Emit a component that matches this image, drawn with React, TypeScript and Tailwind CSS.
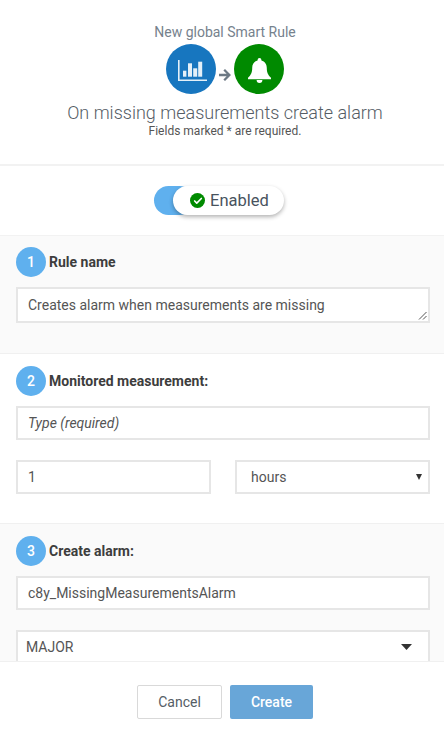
import React from "react";
import { Check } from "lucide-react";

const Step: React.FC<{ n: number; label: string }> = ({ n, label }) => (
  <div className="flex items-center h-[30px] mb-[10px]">
    <span className="flex items-center justify-center w-[30px] h-[30px] rounded-full bg-[#5fb0ee] text-white text-[14px] font-medium">
      {n}
    </span>
    <span className="ml-[3px] text-[14px] font-bold text-[#3d3d3d]">{label}</span>
  </div>
);

const Field: React.FC<{ className?: string; children?: React.ReactNode }> = ({ className, children }) => (
  <div className={`flex items-center h-[34px] border-2 border-[#e6e6e6] bg-white px-[10px] text-[14px] text-[#555] ${className ?? ""}`}>
    {children}
  </div>
);

export default function App() {
  return (
    <div className="flex flex-col w-[444px] h-[733px] overflow-hidden bg-white font-['Roboto',sans-serif]">
      <div className="flex-1 min-h-0 overflow-hidden">
        <header className="h-[166px] border-b-2 border-[#f2f2f2] flex flex-col items-center pt-[24px] pl-[6px]">
          <p className="text-[14px] leading-[16px] text-[#76828d]">New global Smart Rule</p>
          <div className="flex items-center mt-[4px]">
            <div className="w-[50px] h-[50px] rounded-full bg-[#1776bf] flex items-center justify-center">
              <svg className="ml-[3px] mt-[3px]" width="29" height="21" viewBox="0 0 29 21" fill="#e4f0f8">
                <path d="M0 0h1.6v19.4H29V21H0z" />
                <rect x="5" y="10.7" width="3.4" height="6" />
                <rect x="10" y="3.3" width="4" height="13.4" />
                <rect x="15.2" y="8.3" width="4" height="8.4" />
                <rect x="20.2" y="1.7" width="4" height="15" />
              </svg>
            </div>
            <svg className="mx-[3px] mt-[12px]" width="12" height="12" viewBox="0 0 12 12" fill="#6d7a85">
              <path d="M6 0 12 6 6 12 4.4 10.4 7.6 7.2H0V4.8H7.6L4.4 1.6z" />
            </svg>
            <div className="w-[50px] h-[50px] rounded-full bg-[#008a00] flex items-center justify-center">
              <svg className="mt-[3px]" width="23" height="25" viewBox="0 0 24 26" fill="#ffffff">
                <path d="M12 0a2 2 0 0 1 2 2v.6c3.6.9 5.6 3.9 5.6 7.6 0 5 1.2 7.6 4.4 10.3v1.5H0v-1.5c3.2-2.7 4.4-5.3 4.4-10.3 0-3.7 2-6.7 5.6-7.6V2a2 2 0 0 1 2-2z" />
                <path d="M9 23h6a3 3 0 0 1-6 0z" />
              </svg>
            </div>
          </div>
          <h1 className="mt-[8px] text-[18px] leading-[22px] font-light text-[#555d65]">
            On missing measurements create alarm
          </h1>
          <p className="text-[12px] leading-[13px] mt-[1px] text-[#555]">Fields marked * are required.</p>
        </header>

        <div className="h-[70px] border-b border-[#f2f2f2] flex items-center justify-center">
          <div className="relative w-[130px] h-[29px] -ml-[6px]">
            <div className="absolute left-0 top-0 w-[40px] h-[29px] rounded-full bg-[#5fb0ee]" />
            <div className="absolute left-[19px] top-0 w-[111px] h-[29px] rounded-full bg-white shadow-[0_2px_4px_rgba(0,0,0,0.3)] flex items-center pl-[17px]">
              <span className="flex items-center justify-center w-[15px] h-[15px] rounded-full bg-[#008a00]">
                <Check className="w-[10px] h-[10px] text-white" strokeWidth={4} />
              </span>
              <span className="ml-[5px] mt-[2px] text-[16.5px] text-[#48535e]">Enabled</span>
            </div>
          </div>
        </div>

        <section className="h-[118px] bg-[#fafafa] border-b border-[#f0f0f0] pl-[16px] pr-[14px] pt-[11px]">
          <Step n={1} label="Rule name" />
          <Field className="relative h-[36px] mt-[1px]">
            Creates alarm when measurements are missing
            <svg className="absolute right-[1px] bottom-[1px]" width="9" height="9" viewBox="0 0 9 9" stroke="#555" strokeWidth="1">
              <path d="M1 8.5 8.5 1M5 8.5 8.5 5" />
            </svg>
          </Field>
        </section>

        <section className="h-[170px] border-b border-[#f0f0f0] pl-[16px] pr-[14px] pt-[12px]">
          <Step n={2} label="Monitored measurement:" />
          <Field className="italic text-[#7b7b7b]">Type (required)</Field>
          <div className="flex gap-[24px] mt-[20px]">
            <Field className="w-[195px]">1</Field>
            <Field className="w-[195px] relative pl-[14px]">
              hours
              <svg className="absolute right-[6px] top-[12px]" width="6" height="6" viewBox="0 0 6 6" fill="#333">
                <path d="M0 0h6L3 6z" />
              </svg>
            </Field>
          </div>
        </section>

        <section className="bg-[#fafafa] pl-[16px] pr-[14px] pt-[12px] pb-[20px]">
          <Step n={3} label="Create alarm:" />
          <Field>c8y_MissingMeasurementsAlarm</Field>
          <Field className="mt-[20px] relative pl-[8px]">
            MAJOR
            <svg className="absolute right-[16px] top-[12px]" width="11" height="6" viewBox="0 0 11 6" fill="#333">
              <path d="M0 0h11L5.5 6z" />
            </svg>
          </Field>
        </section>
      </div>

      <footer className="h-[72px] shrink-0 border-t border-[#f0f0f0] bg-white flex items-center justify-center gap-[8px] pt-[9px] pl-[6px]">
        <button className="w-[85px] h-[34px] rounded-[2px] border border-[#d9d9d9] bg-white text-[14px] text-[#555d65]">
          Cancel
        </button>
        <button className="w-[83px] h-[34px] rounded-[2px] bg-[#68a6d8] text-[14px] font-medium text-white">
          Create
        </button>
      </footer>
    </div>
  );
}
